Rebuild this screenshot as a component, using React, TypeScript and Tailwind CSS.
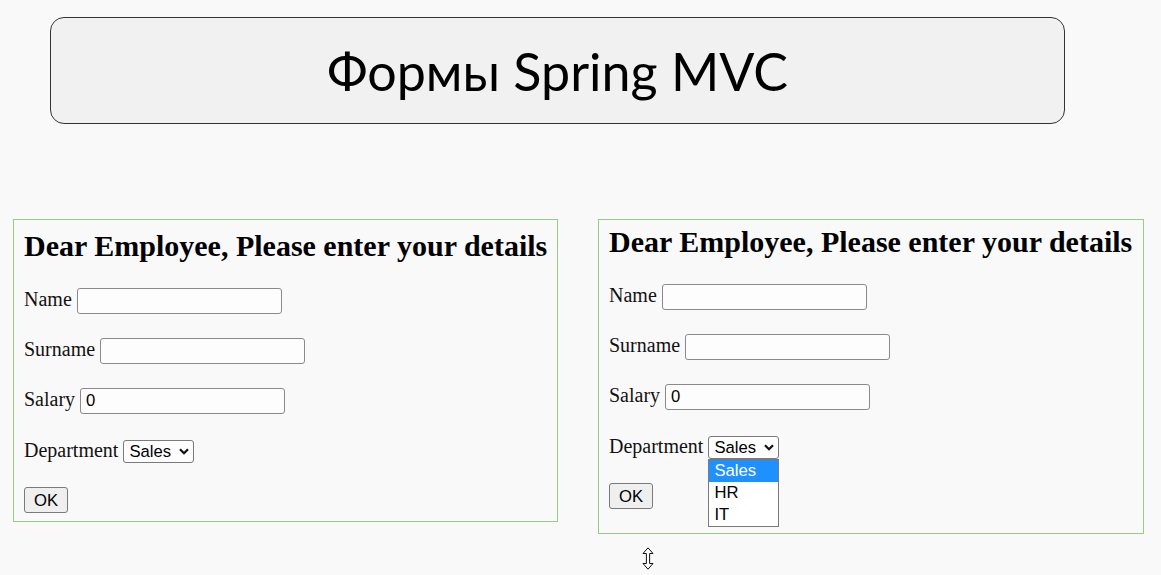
import React from "react";

const serif = { fontFamily: '"Liberation Serif", "Times New Roman", serif' };
const sans = { fontFamily: '"Liberation Sans", Arial, sans-serif' };

function Chevron() {
  return (
    <svg width="10" height="7" viewBox="0 0 10 7" className="shrink-0">
      <path d="M1 1.3 L5 5.3 L9 1.3" fill="none" stroke="#111" strokeWidth="2.2" />
    </svg>
  );
}

function Field({ label, value, mt }: { label: string; value: string; mt: string }) {
  return (
    <div className={`flex items-baseline ${mt}`}>
      <span className="text-[20px] leading-[23px] text-[#111]" style={serif}>
        {label}
      </span>
      <input
        readOnly
        defaultValue={value}
        className="ml-[5px] w-[205px] h-[26px] border border-[#8a8a8a] rounded-[3px] bg-[#fdfdfd] px-[5px] text-[16.67px] text-black outline-none"
        style={sans}
      />
    </div>
  );
}

function Panel({ open, cls }: { open: boolean; cls: string }) {
  return (
    <div className={`border border-[#98c986] pl-[10px] ${cls}`}>
      <h2 className="font-bold text-[30px] leading-[34px] text-black whitespace-nowrap" style={serif}>
        Dear Employee, Please enter your details
      </h2>
      <Field label="Name" value="" mt="mt-[25px]" />
      <Field label="Surname" value="" mt="mt-[24px]" />
      <Field label="Salary" value="0" mt="mt-[24px]" />
      <div className="flex items-baseline mt-[25px]">
        <span className="text-[20px] leading-[23px] text-[#111]" style={serif}>
          Department
        </span>
        <div className="relative ml-[5px] inline-flex">
          <div
            className="inline-flex items-center justify-between w-[71px] h-[23px] border border-[#7a7a7a] rounded-[3px] bg-[#fdfdfd] pl-[5px] pr-[4px] text-[16.67px] leading-[19px] text-black"
            style={sans}
          >
            <span>Sales</span>
            <Chevron />
          </div>
          {open && (
            <div
              className="absolute left-0 top-full w-[71px] border border-[#7a7a7a] bg-white text-[16.67px] text-black"
              style={sans}
            >
              <div className="h-[22px] leading-[22px] px-[5px] bg-[#1e90ff] text-white">Sales</div>
              <div className="h-[22px] leading-[22px] px-[5px]">HR</div>
              <div className="h-[22px] leading-[22px] px-[5px]">IT</div>
            </div>
          )}
        </div>
      </div>
      <div className="mt-[24px]">
        <div
          className="inline-flex items-center justify-center w-[44px] h-[26px] border border-[#7a7a7a] rounded-[3px] bg-[#efefef] text-[16.67px] text-black"
          style={sans}
        >
          OK
        </div>
      </div>
    </div>
  );
}

export default function App() {
  return (
    <div className="relative w-[1161px] h-[575px] overflow-hidden bg-[#f9f9f9] pt-[17px]">
      <div className="ml-[50px] w-[1015px] h-[107px] rounded-[14px] border border-[#333] bg-[#f1f1f1] flex items-center justify-center">
        <h1
          className="text-[52px] leading-none text-black"
          style={{ fontFamily: 'Lato, "Open Sans", sans-serif' }}
        >
          Формы Spring MVC
        </h1>
      </div>
      <div className="mt-[95px] flex items-start pl-[13px] gap-[40px]">
        <Panel open={false} cls="w-[545px] h-[303px] pt-[9px]" />
        <Panel open={true} cls="w-[546px] h-[315px] pt-[5px]" />
      </div>
      <svg
        className="absolute left-[642px] top-[547px]"
        width="12"
        height="23"
        viewBox="0 0 12 23"
      >
        <path
          d="M6 0.8 L11 6.5 L7.6 6.5 L7.6 16.5 L11 16.5 L6 22.2 L1 16.5 L4.4 16.5 L4.4 6.5 L1 6.5 Z"
          fill="#fff"
          stroke="#111"
          strokeWidth="1"
          strokeLinejoin="miter"
        />
      </svg>
    </div>
  );
}
